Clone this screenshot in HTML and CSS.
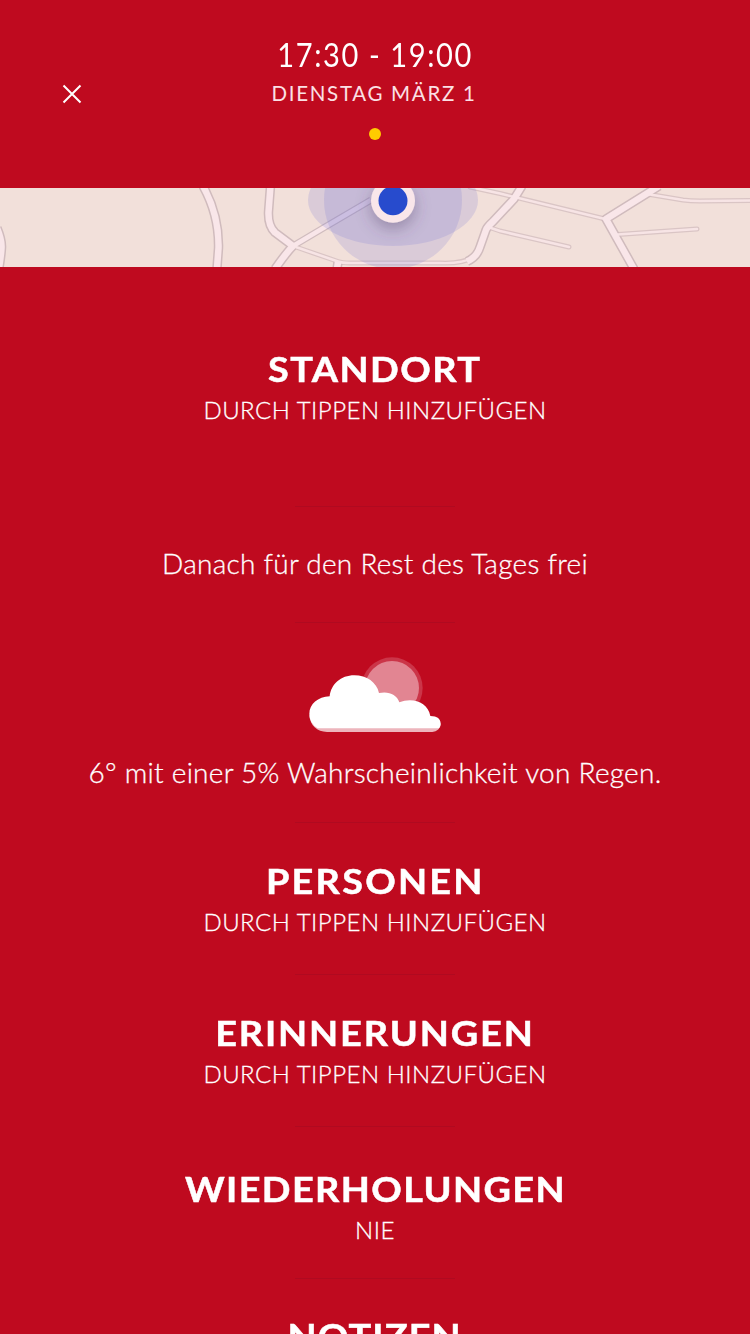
FILE: index.html
```html
<!DOCTYPE html>
<html lang="de">
<head>
    <meta charset="UTF-8">
    <title>Termin</title>
    <link rel="stylesheet" href="styles.css">
</head>
<body>
    <!-- Kopfzeile -->
    <header class="header">
        <button class="close" aria-label="Schließen">
            <svg width="20" height="20" viewBox="0 0 20 20">
                <path d="M1.500 1.500 18.500 18.500M18.500 1.500 1.500 18.500"/>
            </svg>
        </button>
        <div class="when">
            <h1 class="time">17:30 - 19:00</h1>
            <p class="date">DIENSTAG MÄRZ 1</p>
            <span class="dot"></span>
        </div>
    </header>

    <!-- Karte -->
    <svg class="map" viewBox="0 0 750 79">
        <defs>
            <filter id="shadow" x="-100%" y="-100%" width="300%" height="300%">
                <feDropShadow dx="0" dy="6" stdDeviation="8" flood-color="#504060" flood-opacity="0.4"/>
            </filter>
            <g id="thin">
                <path d="M293 58 338 73.500Q342 75 350 75H440Q462 76 474 69"/>
                <path d="M470 -1 500 5.500 605 31"/>
                <path d="M488 39 500 43 569 59"/>
                <path d="M618 46.500 697 41"/>
                <path d="M647 6 683 12Q690 13 700 13L751 12.500"/>
            </g>
            <g id="wide">
                <path d="M203 -2C214 18 219 38 218.500 60L217 80"/>
                <path d="M-3 40Q2 52 1.500 60T-1 80"/>
                <path d="M270.500 -2 268.500 24Q268 38 275 44.500L293 58"/>
                <path d="M275 81Q286 65 293 58"/>
                <path d="M338 74 337 81"/>
                <path d="M467 73.500Q477 69 480 59L486 42Q487 39 493 33.500L514 11 522 -2"/>
                <path d="M659 -2 606 31 634 81"/>
            </g>
            <path id="middle" d="M293 58 325 39 371 12"/>
        </defs>
        <rect width="750" height="79" fill="#f2e0da"/>
        <use href="#thin" class="thin-edge"/>
        <use href="#middle" class="middle-edge"/>
        <use href="#wide" class="wide-edge"/>
        <use href="#thin" class="thin-road"/>
        <use href="#middle" class="middle-road"/>
        <use href="#wide" class="wide-road"/>
        <ellipse cx="393" cy="12" rx="85" ry="46" class="area"/>
        <circle cx="393" cy="12" r="69" class="area"/>
        <circle cx="393" cy="12.700" r="22" fill="#f9e6ea" filter="url(#shadow)"/>
        <circle cx="393" cy="12.700" r="14.500" fill="#274bcd"/>
    </svg>

    <!-- Details -->
    <section class="item place">
        <h2 class="title standort">STANDORT</h2>
        <p class="hint">DURCH TIPPEN HINZUFÜGEN</p>
    </section>
    <section class="item after">
        <p class="note">Danach für den Rest des Tages frei</p>
    </section>
    <section class="item weather">
        <svg class="cloud" width="132" height="76" viewBox="58 50 396 228">
            <circle cx="307" cy="143" r="92" fill="#cb3548"/>
            <circle cx="307" cy="143" r="81" fill="#e28592"/>
            <path fill="#edb5bc" d="M59 225C61 255 82 275 112 275H428A25 25 0 0 0 453 250L428 235H100Z"/>
            <path fill="#fff" d="M120 168C85 170 59 190 59 221Q59 249 84 264H448Q453 259 453 250C453 236 443 227 422 227C415 186 369 170 329 186C321 162 297 152 268 158C261 126 231 105 194 105C153 105 124 132 120 168Z"/>
        </svg>
        <p class="note rain">6° mit einer 5% Wahrscheinlichkeit von Regen.</p>
    </section>
    <section class="item">
        <h2 class="title personen">PERSONEN</h2>
        <p class="hint">DURCH TIPPEN HINZUFÜGEN</p>
    </section>
    <section class="item">
        <h2 class="title erinnerungen">ERINNERUNGEN</h2>
        <p class="hint">DURCH TIPPEN HINZUFÜGEN</p>
    </section>
    <section class="item repeat">
        <h2 class="title wiederholungen">WIEDERHOLUNGEN</h2>
        <p class="hint">NIE</p>
    </section>
    <section class="item notes">
        <h2 class="title notizen">NOTIZEN</h2>
    </section>
</body>
</html>
```
FILE: styles.css
```css
* {
    margin: 0;
    padding: 0;
    box-sizing: border-box;
}

body {
    width: 750px;
    height: 1334px;
    overflow: hidden;
    background-color: #bf0a1f;
    color: #fff;
    font-family: Lato, sans-serif;
    text-align: center;
}

/* Kopfzeile */
.header {
    display: grid;
    grid-template-columns: 143px 1fr 143px;
    height: 188px;
    padding-top: 34px;
}

.close {
    align-self: start;
    justify-self: center;
    height: 20px;
    margin-top: 50px;
    background: none;
    border: none;
}

.close svg {
    display: block;
    fill: none;
    stroke: #fff;
    stroke-width: 2;
}

.when {
    display: flex;
    flex-direction: column;
    align-items: center;
}

.time {
    font-size: 33px;
    font-weight: 400;
    line-height: 40px;
    letter-spacing: 1.8px;
    transform: scaleX(0.88);
}

.date {
    margin-top: 3px;
    padding-right: 2px;
    font-size: 20.5px;
    line-height: 32px;
    letter-spacing: 1.7px;
    color: #fbe0e5;
}

.dot {
    width: 12px;
    height: 12px;
    margin-top: 19px;
    border-radius: 50%;
    background-color: #fc0;
}

/* Karte */
.map {
    display: block;
    width: 750px;
    height: 79px;
}

.map use {
    fill: none;
    stroke-linejoin: round;
}

.thin-edge {
    stroke: #dac5c5;
    stroke-width: 5;
    stroke-linecap: round;
}

.thin-road {
    stroke: #f7e4e5;
    stroke-width: 2.5;
    stroke-linecap: round;
}

.middle-edge {
    stroke: #d0bcbe;
    stroke-width: 7;
}

.middle-road {
    stroke: #f9e6e9;
    stroke-width: 4.5;
}

.wide-edge {
    stroke: #d0bbbd;
    stroke-width: 9.5;
}

.wide-road {
    stroke: #f9e6e9;
    stroke-width: 6.5;
}

.area {
    fill: #6e6ed2;
    fill-opacity: 0.18;
}

/* Details */
.item {
    display: flex;
    flex-direction: column;
    align-items: center;
    height: 152px;
    padding-top: 37px;
}

.item::after {
    content: "";
    width: 160px;
    height: 1px;
    margin-top: auto;
    background-color: #b00a20;
}

.place {
    height: 240px;
    padding-top: 81px;
}

.after {
    height: 116px;
    padding-top: 36px;
}

.weather {
    height: 200px;
    padding-top: 34px;
}

.repeat {
    padding-top: 41px;
}

.notes {
    height: 55px;
    padding-top: 36px;
    overflow: hidden;
}

.notes::after {
    display: none;
}

.title {
    font-size: 35px;
    font-weight: 700;
    line-height: 41px;
    white-space: nowrap;
    transform: scaleX(1.08);
    -webkit-text-stroke: 0.5px #fff;
}

.standort {
    letter-spacing: 1.35px;
}

.personen {
    letter-spacing: 2.1px;
}

.erinnerungen {
    letter-spacing: 1.75px;
}

.wiederholungen {
    letter-spacing: 1.3px;
}

.notizen {
    letter-spacing: 1.05px;
}

.hint {
    font-size: 24px;
    font-weight: 300;
    line-height: 41px;
    letter-spacing: 0.5px;
    white-space: nowrap;
    -webkit-text-stroke: 0.3px #fff;
}

.note {
    font-size: 28px;
    font-weight: 300;
    line-height: 40px;
    letter-spacing: 0.26px;
    white-space: nowrap;
    -webkit-text-stroke: 0.3px #fff;
}

.cloud {
    flex: none;
    display: block;
}

.rain {
    margin-top: 19px;
}
```
